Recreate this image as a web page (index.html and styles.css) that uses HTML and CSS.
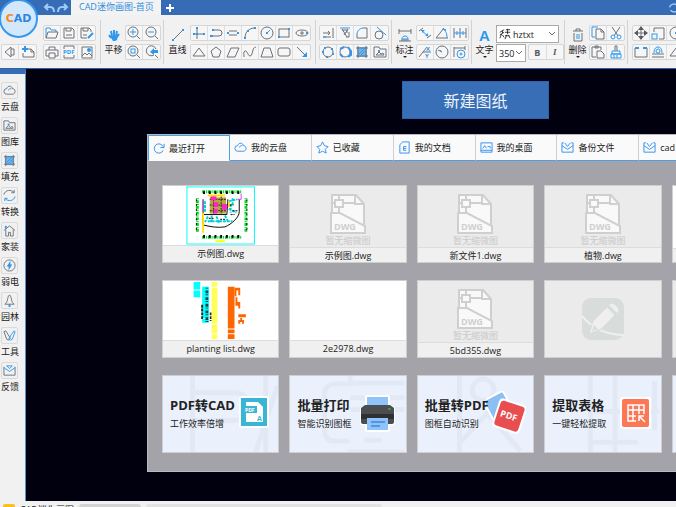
FILE: index.html
```html
<!DOCTYPE html>
<html lang="zh-CN">
<head>
  <meta charset="UTF-8">
  <meta name="viewport" content="width=device-width, initial-scale=1.0">
  <title>CAD迷你画图</title>
  <link rel="stylesheet" href="styles.css">
</head>
<body>
  <!-- icon sprite -->
  <svg class="sprite" aria-hidden="true">
    <symbol id="i-prev" viewBox="0 0 14 14"><path d="M8 2v10L2 7zM8 4h3v6H8"/></symbol>
    <symbol id="i-newfile" viewBox="0 0 14 14"><path d="M6 4h4l3 3v5H2V8M10 4v3h3"/><path class="b thick" d="M4 1v6M1 4h6"/></symbol>
    <symbol id="i-open" viewBox="0 0 14 14"><path class="b" d="M1 12V2h4l1 2h5v2"/><path d="M1 12l2-6h10l-2 6z"/></symbol>
    <symbol id="i-save" viewBox="0 0 14 14"><path d="M2 2h8l2 2v8H2zM4 2v3h5V2"/><path d="M4 9h6"/></symbol>
    <symbol id="i-saveas" viewBox="0 0 14 14"><path d="M7 12H1V2h8l2 2v2M3 2v3h5V2M3 9h4"/><path class="b thick" d="M8 12l5-5"/></symbol>
    <symbol id="i-print" viewBox="0 0 14 14"><path d="M4 5V2h6v3M4 11H1V5h12v6h-3M4 8h6v5H4z"/></symbol>
    <symbol id="i-pdf" viewBox="0 0 14 14"><path d="M2 4V1h10v3M2 10v3h10v-3"/><text class="tiny" x="1" y="9">PDF</text></symbol>
    <symbol id="i-image" viewBox="0 0 14 14"><path d="M2 2h10v11H2zM2 11l3-3 2 2 2-2 3 3"/><circle class="bf" cx="9" cy="5" r="2"/></symbol>
    <symbol id="i-zoomin" viewBox="0 0 14 14"><circle cx="6" cy="6" r="5"/><path d="M10 10l3 3"/><path class="b" d="M3 6h6M6 3v6"/></symbol>
    <symbol id="i-zoomout" viewBox="0 0 14 14"><circle cx="6" cy="6" r="5"/><path d="M10 10l3 3"/><path class="b" d="M3 6h6"/></symbol>
    <symbol id="i-zoomwin" viewBox="0 0 14 14"><circle cx="6" cy="6" r="5"/><path d="M10 10l3 3"/><rect class="b" x="4" y="4" width="4" height="4"/></symbol>
    <symbol id="i-zoomprev" viewBox="0 0 14 14"><path d="M10 10l3 3M11 4a5 5 0 1 0-2 6"/><path class="bf" d="M5 7l4-4v2h4v3H9v2z"/></symbol>
    <symbol id="i-hand" viewBox="0 0 14 14"><path class="b thick" d="M5 8L4 3M7 8V2M9 8l1-5M10 9l2-3M4 10L2 7"/><path class="bf" d="M3 8h8l-1 4-2 1H6z"/></symbol>
    <symbol id="i-line" viewBox="0 0 14 14"><path d="M2 12L12 2"/><path class="bf" d="M1 11h2v2H1zM11 1h2v2h-2z"/></symbol>
    <symbol id="i-xline" viewBox="0 0 14 14"><path d="M5 1v12M1 8h12"/><path class="bf" d="M4 1h2v2H4zM1 7h2v2H1zM11 7h2v2h-2zM4 7h2v2H4z"/></symbol>
    <symbol id="i-pline" viewBox="0 0 14 14"><path d="M4 4h6a3 3 0 0 1 0 6H3"/><path class="bf" d="M1 9h3v2H1zM3 3h2v2H3z"/></symbol>
    <symbol id="i-mline" viewBox="0 0 14 14"><path d="M3 5h8M3 9h8"/><path class="bf" d="M1 6h2v2H1zM11 6h2v2h-2z"/></symbol>
    <symbol id="i-arc" viewBox="0 0 14 14"><path d="M2 12C2 6 6 2 12 2"/><path class="bf" d="M1 11h2v2H1zM11 1h2v2h-2zM4 4h2v2H4z"/></symbol>
    <symbol id="i-circle" viewBox="0 0 14 14"><circle cx="7" cy="7" r="6"/><path class="b" d="M7 7l3-3"/><path class="bf" d="M6 6h2v2H6z"/></symbol>
    <symbol id="i-rect" viewBox="0 0 14 14"><rect x="2" y="3" width="10" height="8"/><path class="bf" d="M11 2h2v2h-2zM1 10h2v2H1z"/></symbol>
    <symbol id="i-ellipse" viewBox="0 0 14 14"><ellipse cx="7" cy="7" rx="6" ry="3"/><path d="M6 6h2v2H6z"/><path class="bf" d="M11 6h2v2h-2z"/></symbol>
    <symbol id="i-tri" viewBox="0 0 14 14"><path d="M7 3l6 8H1z"/></symbol>
    <symbol id="i-penta" viewBox="0 0 14 14"><path d="M7 2l5 4-2 6H4L2 6z"/></symbol>
    <symbol id="i-para" viewBox="0 0 14 14"><path d="M5 3h8l-4 9H1z"/></symbol>
    <symbol id="i-spline" viewBox="0 0 14 14"><path d="M1 12c0-3-1-5 1-6s3 5 5 5 2-3 3-6 1-2 3-3"/></symbol>
    <symbol id="i-trap" viewBox="0 0 14 14"><path d="M4 3h6l3 9H1z"/></symbol>
    <symbol id="i-round" viewBox="0 0 14 14"><rect x="1" y="3" width="12" height="8" rx="2"/></symbol>
    <symbol id="i-arrow" viewBox="0 0 14 14"><path d="M2 2l8 8"/><path class="bf" d="M12 7v5H7z"/></symbol>
    <symbol id="i-extend" viewBox="0 0 14 14"><path d="M2 7h7M7 5l2 2-2 2M2 11h8M12 2v10"/><path class="b" d="M2 11h3"/></symbol>
    <symbol id="i-trim" viewBox="0 0 14 14"><path d="M4 3l5 8M10 3L6 9M9 3v4"/><path class="b" d="M2 2h10"/><path d="M4 4h4M8 11h3M11 6v5"/></symbol>
    <symbol id="i-fillet" viewBox="0 0 14 14"><path d="M8 2h4v10H2V8"/><path class="b" d="M2 8c0-3 3-6 6-6"/></symbol>
    <symbol id="i-tangent" viewBox="0 0 14 14"><circle cx="6" cy="9" r="4"/><path class="b" d="M4 1l9 8"/></symbol>
    <symbol id="i-poly1" viewBox="0 0 14 14"><circle cx="7" cy="7" r="5"/><path class="bf" d="M3 2h2v2H3zM10 3h2v2h-2zM11 8h2v2h-2zM1 6h2v2H1zM5 11h2v2H5z"/></symbol>
    <symbol id="i-poly2" viewBox="0 0 14 14"><circle cx="7" cy="7" r="5"/><path class="b thick" d="M2 4l4-2M10 2l3 4v4l-3 2M2 9l3 3"/></symbol>
    <symbol id="i-hatch" viewBox="0 0 14 14"><rect class="fillb" x="2" y="2" width="10" height="10"/><path d="M3 1v12M11 1v12M1 3h12M1 11h12"/><path class="b" d="M4 9l5-5M6 10l4-4"/></symbol>
    <symbol id="i-gallery" viewBox="0 0 14 14"><path d="M1 12V2h5l1 2h6v8z"/><path d="M3 10l3-3 2 2 2-1 1 2z"/><path class="bf" d="M5 5h2v2H5z"/></symbol>
    <symbol id="i-dim" viewBox="0 0 14 14"><path d="M1 1v5M13 1v5M1 3h12M3 12h8M1 13h12"/><path class="b" d="M4 11c0-4 6-4 6 0z"/></symbol>
    <symbol id="i-aligned" viewBox="0 0 14 14"><path d="M1 5l4-3M9 12l4-3"/><path class="b" d="M3 4l8 7"/><path class="bf" d="M4 4h3L4 7zM10 7v3H7z"/></symbol>
    <symbol id="i-angle" viewBox="0 0 14 14"><path d="M13 12H1L9 2"/><path class="b" d="M7 3c4 1 5 5 5 9"/><path class="bf" d="M8 3h3v2z"/></symbol>
    <symbol id="i-cont" viewBox="0 0 14 14"><path d="M1 2v10M7 2v10M13 2v10"/><path class="b" d="M1 7h12M4 5v4M10 5v4"/></symbol>
    <symbol id="i-coord" viewBox="0 0 14 14"><path d="M1 12l4-5h8M5 7l4-5"/><text class="tiny" x="8" y="6">X</text><text class="tiny" x="7" y="13">Y</text></symbol>
    <symbol id="i-radius" viewBox="0 0 14 14"><circle cx="7" cy="7" r="6"/><path d="M7 7L3 5"/><path class="b" d="M7 7l-2-2"/></symbol>
    <symbol id="i-dimset" viewBox="0 0 14 14"><path d="M1 2v10M12 1v4M1 3h11"/><circle class="b" cx="8" cy="9" r="4"/><circle class="b" cx="8" cy="9" r="1"/></symbol>
    <symbol id="i-fontmark" viewBox="0 0 14 14"><path d="M1 5l5-3M4 3v3M1 8l5-3M3 7l-2 5M4 8l2 3M8 2h5M10 1v6M7 5h6M9 8l-2 5M11 8l2 4M7 9h5"/></symbol>
    <symbol id="i-trash" viewBox="0 0 14 14"><path d="M2 3h10M5 3V1h4v2M3 5v8h8V5"/><path class="b" d="M6 6v5M8 6v5"/></symbol>
    <symbol id="i-copy" viewBox="0 0 14 14"><path class="b" d="M4 11H1V1h6"/><path d="M5 3h5l3 3v7H5zM10 3v3h3"/></symbol>
    <symbol id="i-cut" viewBox="0 0 14 14"><path d="M3 1l6 9M11 1L5 10"/><circle class="b" cx="4" cy="11" r="2"/><circle class="b" cx="10" cy="11" r="2"/></symbol>
    <symbol id="i-paste" viewBox="0 0 14 14"><path d="M5 12H1V2h9v3M4 1h3v2H4zM6 6h4l3 3v4H6z"/></symbol>
    <symbol id="i-brush" viewBox="0 0 14 14"><path d="M6 6V1h2v5"/><path class="b" d="M3 6h8v3H3z"/><path class="b" d="M2 9h10v4H2zM5 10v3M8 10v3"/></symbol>
    <symbol id="i-move" viewBox="0 0 14 14"><path d="M7 3v8M3 7h8"/><path class="gf" d="M7 0l3 4H4zM7 14l3-4H4zM0 7l4-3v6zM14 7l-4-3v6z"/></symbol>
    <symbol id="i-scale" viewBox="0 0 14 14"><path d="M3 6V2h10v11H8"/><rect class="b" x="1" y="8" width="5" height="5"/></symbol>
    <symbol id="i-break" viewBox="0 0 14 14"><path d="M1 3v9h12V3"/><path class="b thick" d="M1 3h4M9 3h4"/></symbol>
    <symbol id="i-stamp" viewBox="0 0 14 14"><path class="b" d="M3 8c0-3 1-6 4-6s4 3 4 6"/><path d="M1 9h12M1 12h12"/><circle class="b" cx="7" cy="6" r="2"/></symbol>
    <symbol id="i-cloud" viewBox="0 0 14 14"><path d="M4 11a3 3 0 0 1 0-6c1-4 6-3 6 0 4 0 4 6 0 6z"/><path class="b" d="M6 7c0-2 2-2 3-2"/></symbol>
    <symbol id="i-sync" viewBox="0 0 14 14"><path d="M1 6c1-5 8-6 11-2V1M12 4H9"/><path class="b" d="M13 8c-1 5-8 6-11 2v3M2 10h3"/></symbol>
    <symbol id="i-home" viewBox="0 0 14 14"><path d="M1 7l6-5 6 5M3 6v7h3V9h2v4h3V6"/><path class="b thick" d="M3 2v3"/></symbol>
    <symbol id="i-power" viewBox="0 0 14 14"><circle cx="7" cy="7" r="6"/><path class="bf" d="M8 2L4 8h2v4l4-6H8z"/></symbol>
    <symbol id="i-tree" viewBox="0 0 14 14"><path d="M7 1C5 2 5 7 4 9l-2 2h10l-2-2C9 7 9 2 7 1z"/><path class="bf" d="M6 11h2v3H6z"/></symbol>
    <symbol id="i-tools" viewBox="0 0 14 14"><path d="M1 3l2-1 5 8-2 2-2-1z"/><path class="b" d="M12 2l1 1-3 8-2 1-2-1 3-5z"/></symbol>
    <symbol id="i-mail" viewBox="0 0 14 14"><path d="M1 3v9h12V3"/><path class="b" d="M1 4l6 4 6-4M4 2l3 3 3-3z"/></symbol>
    <symbol id="i-recent" viewBox="0 0 14 14"><path d="M12 9a5 5 0 1 1 0-4M13 2v4H9"/></symbol>
    <symbol id="i-star" viewBox="0 0 14 14"><path d="M7 1l2 4 4 1-3 3 1 4-4-2-4 2 1-4-3-3 4-1z"/></symbol>
    <symbol id="i-doc" viewBox="0 0 14 14"><path d="M5 1h7v12H2V4zM9 6H6v4h3M6 8h3"/></symbol>
    <symbol id="i-desktop" viewBox="0 0 14 14"><path d="M1 2h12v10H1zM1 10h12M3 8l2-3 2 3M8 6h3v2"/></symbol>
    <symbol id="i-mailtab" viewBox="0 0 14 14"><path d="M3 2H1v10h12V2h-2M1 5l6 4 6-4M4 2l3 4 3-4"/></symbol>
    <symbol id="i-chev" viewBox="0 0 8 8"><path d="M1 2l3 3 3-3"/></symbol>

    <symbol id="dwg-file" viewBox="0 0 36 40">
      <path class="paper" d="M2 1h24l8 9v29H2z"/>
      <path class="outline" d="M2 19V1h24l8 9v22M2 9h22M9 1v18M25 1v9h9M1 19h9l25 13v7H1z"/>
      <rect class="outline paper" x="5" y="6" width="8" height="7"/>
      <text class="dwg-text" x="4" y="36">DWG</text>
    </symbol>
  </svg>

  <div class="app">
    <header class="titlebar">
      <div class="history">
        <button class="plain" aria-label="撤销"><svg class="icon history-icon" viewBox="0 0 12 10"><path d="M5 1L2 4l3 3M2 4h5c3 0 4 2 4 5"/></svg></button>
        <button class="plain" aria-label="重做"><svg class="icon history-icon" viewBox="0 0 12 10"><path d="M7 1l3 3-3 3M10 4H5C2 4 1 6 1 9"/></svg></button>
      </div>
      <a class="page-tab" href="#">CAD迷你画图-首页</a>
      <button class="plain add-tab" aria-label="新标签">
        <svg class="icon" viewBox="0 0 10 10"><path d="M5 1v8M1 5h8"/></svg>
      </button>
      <div class="window-actions">
        <button class="plain" aria-label="刷新"><svg class="icon history-icon" viewBox="0 0 14 14"><path d="M1 6c1-5 8-6 11-2M13 8c-1 5-8 6-11 2"/></svg></button>
      </div>
    </header>
    <a class="logo" href="#" aria-label="CAD"><span>C</span>AD</a>

    <nav class="toolbar">
      <div class="section file-section">
        <div class="rows">
          <div class="group nav-group"><button aria-label="后退"><svg class="icon"><use href="#i-prev"/></svg></button><button aria-label="新建"><svg class="icon"><use href="#i-newfile"/></svg></button></div>
        </div>
        <div class="rows">
          <div class="group"><button aria-label="打开"><svg class="icon"><use href="#i-open"/></svg></button><button aria-label="保存"><svg class="icon"><use href="#i-save"/></svg></button><button aria-label="另存为"><svg class="icon"><use href="#i-saveas"/></svg></button></div>
          <div class="group"><button aria-label="打印"><svg class="icon"><use href="#i-print"/></svg></button><button aria-label="PDF"><svg class="icon"><use href="#i-pdf"/></svg></button><button aria-label="图片"><svg class="icon"><use href="#i-image"/></svg></button></div>
        </div>
      </div>

      <div class="section">
        <button class="big"><svg class="icon"><use href="#i-hand"/></svg>平移</button>
        <div class="rows">
          <div class="group"><button aria-label="放大"><svg class="icon"><use href="#i-zoomin"/></svg></button><button aria-label="缩小"><svg class="icon"><use href="#i-zoomout"/></svg></button></div>
          <div class="group"><button aria-label="窗口缩放"><svg class="icon"><use href="#i-zoomwin"/></svg></button><button aria-label="上一视图"><svg class="icon"><use href="#i-zoomprev"/></svg></button></div>
        </div>
      </div>

      <div class="section roomy">
        <button class="big"><svg class="icon"><use href="#i-line"/></svg>直线</button>
        <div class="rows">
          <div class="group">
            <button aria-label="构造线"><svg class="icon"><use href="#i-xline"/></svg></button>
            <button aria-label="多段线"><svg class="icon"><use href="#i-pline"/></svg></button>
            <button aria-label="双线"><svg class="icon"><use href="#i-mline"/></svg></button>
            <button aria-label="圆弧"><svg class="icon"><use href="#i-arc"/></svg></button>
            <button aria-label="圆"><svg class="icon"><use href="#i-circle"/></svg></button>
            <button aria-label="矩形"><svg class="icon"><use href="#i-rect"/></svg></button>
            <button aria-label="椭圆"><svg class="icon"><use href="#i-ellipse"/></svg></button>
          </div>
          <div class="group">
            <button aria-label="三角形"><svg class="icon"><use href="#i-tri"/></svg></button>
            <button aria-label="多边形"><svg class="icon"><use href="#i-penta"/></svg></button>
            <button aria-label="平行四边形"><svg class="icon"><use href="#i-para"/></svg></button>
            <button aria-label="样条曲线"><svg class="icon"><use href="#i-spline"/></svg></button>
            <button aria-label="梯形"><svg class="icon"><use href="#i-trap"/></svg></button>
            <button aria-label="圆角矩形"><svg class="icon"><use href="#i-round"/></svg></button>
            <button aria-label="箭头"><svg class="icon"><use href="#i-arrow"/></svg></button>
          </div>
        </div>
      </div>

      <div class="section">
        <div class="rows">
          <div class="group">
            <button aria-label="延伸"><svg class="icon"><use href="#i-extend"/></svg></button>
            <button aria-label="修剪"><svg class="icon"><use href="#i-trim"/></svg></button>
            <button aria-label="圆角"><svg class="icon"><use href="#i-fillet"/></svg></button>
            <button aria-label="相切"><svg class="icon"><use href="#i-tangent"/></svg></button>
          </div>
          <div class="group">
            <button aria-label="内接"><svg class="icon"><use href="#i-poly1"/></svg></button>
            <button aria-label="外切"><svg class="icon"><use href="#i-poly2"/></svg></button>
            <button aria-label="填充"><svg class="icon"><use href="#i-hatch"/></svg></button>
            <button aria-label="图库"><svg class="icon"><use href="#i-gallery"/></svg></button>
          </div>
        </div>
      </div>

      <div class="section">
        <button class="big has-menu"><svg class="icon"><use href="#i-dim"/></svg>标注</button>
        <div class="rows">
          <div class="group"><button aria-label="对齐标注"><svg class="icon"><use href="#i-aligned"/></svg></button><button aria-label="角度标注"><svg class="icon"><use href="#i-angle"/></svg></button><button aria-label="连续标注"><svg class="icon"><use href="#i-cont"/></svg></button></div>
          <div class="group"><button aria-label="坐标标注"><svg class="icon"><use href="#i-coord"/></svg></button><button aria-label="半径标注"><svg class="icon"><use href="#i-radius"/></svg></button><button aria-label="标注设置"><svg class="icon"><use href="#i-dimset"/></svg></button></div>
        </div>
      </div>

      <div class="section">
        <button class="big has-menu"><span class="letter">A</span>文字</button>
        <div class="font-rows">
          <div class="select-box">
            <svg class="icon dark"><use href="#i-fontmark"/></svg>
            <select aria-label="字体"><option>hztxt</option></select>
            <svg class="icon chev"><use href="#i-chev"/></svg>
          </div>
          <div class="font-size-row">
            <div class="select-box small">
              <select aria-label="字高"><option>350</option></select>
              <svg class="icon chev"><use href="#i-chev"/></svg>
            </div>
            <div class="group letters"><button aria-label="粗体">B</button><button class="italic" aria-label="斜体">I</button></div>
          </div>
        </div>
      </div>

      <div class="section">
        <button class="big has-menu"><svg class="icon"><use href="#i-trash"/></svg>删除</button>
        <div class="rows">
          <div class="group"><button aria-label="复制"><svg class="icon"><use href="#i-copy"/></svg></button><button aria-label="剪切"><svg class="icon"><use href="#i-cut"/></svg></button></div>
          <div class="group"><button aria-label="粘贴"><svg class="icon"><use href="#i-paste"/></svg></button><button aria-label="格式刷"><svg class="icon"><use href="#i-brush"/></svg></button></div>
        </div>
      </div>

      <div class="section roomy">
        <div class="rows">
          <div class="group"><button aria-label="移动"><svg class="icon"><use href="#i-move"/></svg></button><button aria-label="缩放"><svg class="icon"><use href="#i-scale"/></svg></button><button aria-label="旋转"><svg class="icon"><use href="#i-circle"/></svg></button></div>
          <div class="group"><button aria-label="打断"><svg class="icon"><use href="#i-break"/></svg></button><button aria-label="图章"><svg class="icon"><use href="#i-stamp"/></svg></button><button aria-label="镜像"><svg class="icon"><use href="#i-tri"/></svg></button></div>
        </div>
      </div>
    </nav>

    <div class="main">
      <aside class="sidebar">
        <button><svg class="icon"><use href="#i-cloud"/></svg>云盘</button>
        <button><svg class="icon"><use href="#i-gallery"/></svg>图库</button>
        <button><svg class="icon"><use href="#i-hatch"/></svg>填充</button>
        <button><svg class="icon"><use href="#i-sync"/></svg>转换</button>
        <button><svg class="icon"><use href="#i-home"/></svg>家装</button>
        <button><svg class="icon"><use href="#i-power"/></svg>弱电</button>
        <button><svg class="icon"><use href="#i-tree"/></svg>园林</button>
        <button><svg class="icon"><use href="#i-tools"/></svg>工具</button>
        <button><svg class="icon"><use href="#i-mail"/></svg>反馈</button>
      </aside>

      <main class="canvas">
        <button class="new-drawing">新建图纸</button>

        <section class="panel">
          <div class="tabs">
            <a class="tab active" href="#"><svg class="icon"><use href="#i-recent"/></svg>最近打开</a>
            <a class="tab" href="#"><svg class="icon"><use href="#i-cloud"/></svg>我的云盘</a>
            <a class="tab" href="#"><svg class="icon"><use href="#i-star"/></svg>已收藏</a>
            <a class="tab" href="#"><svg class="icon"><use href="#i-doc"/></svg>我的文档</a>
            <a class="tab" href="#"><svg class="icon"><use href="#i-desktop"/></svg>我的桌面</a>
            <a class="tab" href="#"><svg class="icon"><use href="#i-mailtab"/></svg>备份文件</a>
            <a class="tab" href="#"><svg class="icon"><use href="#i-mailtab"/></svg>cad</a>
            <a class="tab" href="#"></a>
          </div>

          <div class="cards">
            <a class="card" href="#">
              <svg class="thumb" viewBox="0 0 115 62">
                <rect x="22" y="1" width="71" height="60" fill="#fff" stroke="#00ffff" stroke-width="1"/>
                <g fill="none" stroke="#00d820" stroke-width="3">
                  <path d="M38 6h41M38 54h41" stroke-dasharray="3 1 1 1"/>
                  <path d="M33 13v36M84 13v36" stroke-dasharray="1 1 3 1"/>
                </g>
                <g fill="none" stroke="#000" stroke-width="1">
                  <path d="M39 7h39M39 53h39" stroke-width="3" stroke-dasharray="2 4"/>
                  <path d="M32 14v34M85 14v34" stroke-dasharray="2 3"/>
                  <path d="M39 14v27c9 2 15 3 23 2 7-3 15-10 15-16V14M39 30h25l1-16"/>
                </g>
                <path d="M44 32l-3 6M48 31v8M53 32l3 7M62 31l3 6M66 16l9-2M66 24l8 4M68 19v9M41 16v12M44 37h26M70 13v7" fill="none" stroke="#00cfd8" stroke-width="2" stroke-dasharray="3 1"/>
                <rect x="46" y="12" width="17" height="17" fill="#b5a83c"/>
                <path d="M46 14h17M46 20h17M46 26h17M50 11v19M58 11v19" stroke="#222" stroke-dasharray="2 1"/>
                <path d="M47 10h6v5h-6zM50 17h5v5h-5zM59 19h5v6h-5zM50 24h4v5h-4z" fill="#ff20d0"/>
                <path d="M79 8v6M75 14h4M39 14v13" stroke="#d040ff" stroke-width="1"/>
                <path d="M39 28v21M44 10h18M66 16v6" stroke="#ffe000" stroke-width="2"/>
                <path d="M52 58h10" stroke="#ffff00" stroke-width="2"/>
                <path d="M67 20h4M70 26h5M57 35h5M45 34h5M68 30h4" stroke="#000" stroke-dasharray="2 1"/>
              </svg>
              <span class="name">示例图.dwg</span>
            </a>
            <a class="card" href="#"><span class="thumb empty"><svg class="dwg"><use href="#dwg-file"/></svg>暂无缩微图</span><span class="name">示例图.dwg</span></a>
            <a class="card" href="#"><span class="thumb empty"><svg class="dwg"><use href="#dwg-file"/></svg>暂无缩微图</span><span class="name">新文件1.dwg</span></a>
            <a class="card" href="#"><span class="thumb empty"><svg class="dwg"><use href="#dwg-file"/></svg>暂无缩微图</span><span class="name">植物.dwg</span></a>
            <a class="card" href="#"><span class="thumb"></span><span class="name"></span></a>

            <a class="card" href="#">
              <svg class="thumb" viewBox="0 0 115 62">
                <path d="M29 1h7v8h-7zM29 10h7v7h-7zM38 6h7v33h-7zM38 40h7v4h-7z" fill="#00ffff"/>
                <path d="M43 7v36" stroke="#004850" stroke-width="3" stroke-dasharray="1 2 3 1"/>
                <path d="M38 25v16M47 33v9" stroke="#222" stroke-width="2" stroke-dasharray="3 1"/>
                <path d="M48 1h6v5h-6zM48 7h6v38h-6zM48 46h6v9h-6zM48 56h6v5h-6z" fill="#ffff58"/>
                <path d="M65 6h7v44h-7zM65 51h7v4h-7zM65 56h7v5h-7z" fill="#ff6600"/>
                <path d="M72 7h6v8h-2v-5h-2v6h-2zM73 17h2v6h-2zM73 22h5v7h-2v-3h-3zM76 35h8v3h-8zM76 41h2v-2h2v2h2v4h-2v-2h-2v2h-2z" fill="#ff6600"/>
              </svg>
              <span class="name">planting list.dwg</span>
            </a>
            <a class="card" href="#"><span class="thumb"></span><span class="name">2e2978.dwg</span></a>
            <a class="card" href="#"><span class="thumb empty"><svg class="dwg"><use href="#dwg-file"/></svg>暂无缩微图</span><span class="name">5bd355.dwg</span></a>
            <a class="card blank" href="#" aria-label="空">
              <svg viewBox="0 0 42 42">
                <rect x="0" y="0" width="42" height="42" rx="9" fill="#d8dcdb"/>
                <path d="M0 18c9 11 22 19 42 19" fill="none" stroke="#efefef" stroke-width="2"/>
                <path d="M7 36l4-13L25 9l8 8-14 14z" fill="#efefef" stroke="#d8dcdb"/>
                <path d="M27 7c2-2 4-2 6 0l2 2c2 2 2 4 0 6z" fill="#efefef"/>
                <path d="M12 27l4 4-6 2z" fill="#d8dcdb"/>
              </svg>
            </a>
            <a class="card blank" href="#" aria-label="空"></a>

            <a class="card promo" href="#">
              <svg class="backdrop" viewBox="0 0 115 77"><path d="M29 0v77M29 17h42q14 0 14 14t-14 14H29M103 0v77M115 10l-22 67"/></svg>
              <svg class="promo-icon" viewBox="0 0 40 44">
                <rect x="8" y="5" width="30" height="32" rx="3" fill="#fff"/>
                <rect x="10" y="7" width="26" height="28" fill="#3bb5d4"/>
                <path d="M15 11h12l5 5v15H15z" fill="#fff"/>
                <rect x="13" y="15" width="13" height="7" fill="#3bb5d4"/>
                <text x="14" y="21" class="mini-label">PDF</text>
                <text x="26" y="30" class="mini-a">A</text>
              </svg>
              <strong>PDF转CAD</strong><span>工作效率倍增</span>
            </a>
            <a class="card promo" href="#">
              <svg class="backdrop" viewBox="0 0 115 77"><path d="M60 0v8H45q-11 0-11 11v36q0 11 11 11h14M60 7h55M60 22h55M60 34h55M74 65h18M58 77h57"/></svg>
              <svg class="promo-icon" viewBox="0 0 40 44">
                <path d="M8 6h21v9l5 3v14l-5 1v6H8v-6l-5-1V18l5-3z" fill="#fff" stroke="#fff" stroke-width="4" stroke-linejoin="round"/>
                <path d="M8 6h21v11H8z" fill="#8fc3fa"/>
                <path d="M6 14h25l4 3v14q0 2-2 2H4q-2 0-2-2V17z" fill="#4c4d50"/>
                <path d="M2 23h33v5H2z" fill="#2e3033"/>
                <path d="M29 18h3" stroke="#24d66c" stroke-width="1"/>
                <path d="M8 27h21v12H8z" fill="#8fc3fa"/>
                <path d="M12 31h14M12 35h9" stroke="#1a69cf" stroke-width="1"/>
              </svg>
              <strong>批量打印</strong><span>智能识别图框</span>
            </a>
            <a class="card promo" href="#">
              <svg class="backdrop" viewBox="0 0 115 77"><path d="M41 0v77M41 68l28-30 34 38"/><circle cx="65" cy="14" r="11"/></svg>
              <svg class="promo-icon" viewBox="0 0 40 44">
                <g transform="rotate(-28 14 18)"><rect x="2" y="2" width="24" height="32" rx="3" fill="#fff"/><rect x="4" y="4" width="20" height="28" rx="2" fill="#8cc0f3"/><path d="M4 25l8-7 8 9v5H4z" fill="#315985"/></g>
                <g transform="rotate(18 23 25)"><rect x="9" y="10" width="29" height="30" rx="4" fill="#fff"/><rect x="11" y="12" width="25" height="26" rx="3" fill="#e84e50"/><text x="14" y="28" class="pdf-label">PDF</text></g>
              </svg>
              <strong>批量转PDF</strong><span>图框自动识别</span>
            </a>
            <a class="card promo" href="#">
              <svg class="backdrop" viewBox="0 0 115 77"><path d="M45 0v77M70 0v77M45 36h70M45 67h48M110 5v50"/></svg>
              <svg class="promo-icon" viewBox="0 0 40 44">
                <rect x="6" y="6" width="31" height="32" rx="3" fill="#fff"/>
                <rect x="8" y="8" width="27" height="28" rx="2" fill="#fd7754"/>
                <path d="M22 30h-8V14h16v9M14 19h16M14 25h8M19 14v16M25 14v9M31 31l-6-6M25 30v-5h5" fill="none" stroke="#fff" stroke-width="1.500"/>
              </svg>
              <strong>提取表格</strong><span>一键轻松提取</span>
            </a>
            <a class="card promo" href="#" aria-label="更多"></a>
          </div>
        </section>
      </main>
    </div>

    <footer class="statusbar">
      <span class="status-icon"></span>
      <span class="status-title">CAD迷你画图</span>
      <span class="pill"></span>
      <span class="pill hint"></span>
    </footer>
  </div>
</body>
</html>
```
FILE: styles.css
```css
* {
  box-sizing: border-box;
}
body {
  margin: 0;
  height: 100vh;
  overflow: hidden;
  font-family: "Open Sans", "Noto Sans CJK SC", sans-serif;
  font-size: 9px;
  color: #222;
  background-color: #f1f1f1;
}
a {
  color: inherit;
  text-decoration: none;
}
button {
  font: inherit;
  color: inherit;
  padding: 0;
  border: none;
  background: none;
  cursor: pointer;
}
.sprite {
  display: none;
}
.app {
  position: relative;
  display: flex;
  flex-direction: column;
  min-width: 925px;
  height: 100vh;
}

/* icons */
.icon {
  display: block;
  flex: none;
  width: 14px;
  height: 14px;
  fill: none;
  stroke: #6c7178;
  stroke-width: 1;
}
.b {
  stroke: #2f97ee;
}
.bf {
  fill: #2f97ee;
  stroke: none;
}
.gf {
  fill: #555b63;
  stroke: none;
}
.fillb {
  fill: #6fb5f2;
  stroke: none;
}
.thick {
  stroke-width: 2;
}
.dark {
  stroke: #222;
}
.tiny {
  font-size: 6px;
  font-weight: bold;
  fill: #2f97ee;
  stroke: none;
}

/* title bar */
.titlebar {
  display: flex;
  flex: none;
  height: 15px;
  background-color: #356cb5;
}
.history {
  display: flex;
  align-items: center;
  gap: 2px;
  width: 71px;
  padding-left: 43px;
}
.history-icon {
  width: 12px;
  height: 10px;
  stroke: #9ccbf7;
  stroke-width: 2;
}
.page-tab {
  padding: 0 7px 0 8px;
  line-height: 13px;
  color: #2d8ce0;
  background-color: #f3f3f3;
}
.add-tab {
  padding: 0 4px;
}
.add-tab .icon {
  width: 10px;
  height: 10px;
  stroke: #fff;
  stroke-width: 2;
}
.window-actions {
  display: flex;
  width: 257px;
  margin-left: auto;
}
.logo {
  position: absolute;
  top: -1px;
  left: -1px;
  display: flex;
  align-items: center;
  justify-content: center;
  width: 39px;
  height: 39px;
  border: 2px solid #3796ef;
  border-radius: 50%;
  background-color: #d3e8fb;
  font-family: "DejaVu Sans", sans-serif;
  font-size: 11px;
  font-weight: bold;
  color: #2f86e0;
}
.logo span {
  color: #f58a1f;
}

/* toolbar */
.toolbar {
  display: flex;
  flex: none;
  height: 54px;
  padding-top: 5px;
  border-bottom: 1px solid #2a62a8;
  background-color: #f1f1f1;
}
.section {
  display: flex;
  gap: 2px;
  height: 44px;
  padding: 5px 2px 0 3px;
  border-right: 1px solid #d2d2d2;
}
.section.roomy {
  gap: 3px;
  padding: 5px 4px 0 4px;
}
.section.file-section {
  gap: 6px;
  padding: 5px 4px 0 1px;
}
.rows {
  display: flex;
  flex-direction: column;
  gap: 3px;
}
.group {
  display: flex;
  height: 16px;
  border: 1px solid #d6d6d6;
  border-radius: 2px;
  background-color: #f6f6f6;
}
.group button {
  display: flex;
  align-items: center;
  justify-content: center;
  width: 17px;
  border-right: 1px solid #dedede;
}
.group button:last-child {
  border-right: none;
}
.nav-group {
  margin-top: 19px;
}
.big {
  display: flex;
  flex-direction: column;
  align-items: center;
  width: 19px;
  height: 36px;
  padding-top: 3px;
  line-height: 12px;
  white-space: nowrap;
}
.big .icon {
  margin-bottom: 2px;
}
.has-menu::after {
  content: "";
  border: 2px solid transparent;
  border-top-color: #222;
}
.letter {
  height: 16px;
  font-family: "Liberation Sans", sans-serif;
  font-size: 15px;
  line-height: 16px;
  font-weight: bold;
  color: #2f97ee;
}
.font-rows {
  display: flex;
  flex-direction: column;
  gap: 1px;
  width: 63px;
  margin-right: 3px;
}
.select-box {
  display: flex;
  align-items: center;
  gap: 2px;
  height: 18px;
  padding: 0 2px;
  border: 1px solid #aaa;
  background-color: #fff;
}
.select-box .dark {
  width: 12px;
  height: 12px;
}
.select-box select {
  flex: 1;
  min-width: 0;
  padding: 0;
  border: none;
  appearance: none;
  background: none;
  font: inherit;
  color: #222;
}
.select-box.small {
  gap: 0;
  width: 33px;
}
.select-box .chev {
  width: 8px;
  height: 8px;
}
.font-size-row {
  display: flex;
  gap: 2px;
}
.letters {
  flex: 1;
  font-weight: bold;
  color: #555b63;
}
.letters button {
  flex: 1;
}
.letters .italic {
  font-family: "Liberation Serif", serif;
  font-style: italic;
}

/* sidebar */
.main {
  display: flex;
  flex: 1;
  min-height: 0;
}
.sidebar {
  display: flex;
  flex: none;
  flex-direction: column;
  align-items: flex-start;
  gap: 4px;
  width: 26px;
  padding: 8px 0 0 1px;
  border-top: 5px solid #356cb5;
  border-right: 1px solid #5f8fc9;
  background-color: #f1f1f1;
}
.sidebar button {
  line-height: 12px;
  white-space: nowrap;
}
.sidebar .icon {
  width: 17px;
  height: 17px;
  margin-bottom: 2px;
  padding: 1px;
  border: 1px solid #dadada;
  border-radius: 2px;
}

/* home screen */
.canvas {
  display: flex;
  flex: 1;
  flex-direction: column;
  align-items: center;
  gap: 15px;
  padding: 12px 121px 0;
  background-color: #00000f;
}
.new-drawing {
  width: 147px;
  height: 38px;
  flex: none;
  border: 1px solid #2f64aa;
  background-color: #376eb6;
  color: #eef4fb;
  font-size: 16px;
}
.panel {
  width: 100%;
  border: 1px solid #b9b9bd;
  background-color: #a4a3a9;
}
.tabs {
  display: grid;
  grid-template-columns: repeat(8, 1fr);
  height: 26px;
  background-color: #fafafa;
}
.tab {
  display: flex;
  align-items: center;
  gap: 4px;
  padding-left: 4px;
  border-right: 1px solid #cfcfcf;
  border-bottom: 1px solid #4ba0ea;
}
.tab.active {
  padding-left: 3px;
  border: 1px solid #4ba0ea;
  border-bottom-color: #fafafa;
}
.tab .icon {
  width: 13px;
  height: 13px;
}
.tab .icon {
  stroke: #2f8ff0;
}
.cards {
  display: grid;
  grid-template-columns: repeat(5, 1fr);
  gap: 17px 10px;
  padding: 24px 14px 18px;
}
.card {
  display: flex;
  flex-direction: column;
  height: 78px;
  border: 1px solid #cfcfcf;
  background-color: #f0f0f0;
}
.thumb {
  display: block;
  width: 100%;
  height: 62px;
  background-color: #fff;
}
.thumb.empty {
  display: flex;
  flex-direction: column;
  align-items: center;
  padding-top: 8px;
  background-color: #ebebeb;
  color: #c9c9c9;
  line-height: 13px;
}
.dwg {
  width: 36px;
  height: 40px;
  flex: none;
}
.paper {
  fill: #f9f9f9;
}
.outline {
  stroke: #cfcfcf;
  stroke-width: 2;
}
path.outline {
  fill: none;
}
.dwg-text {
  font-size: 9px;
  font-weight: bold;
  fill: #cfcfcf;
}
.name {
  flex: 1;
  border-top: 1px solid #dcdcdc;
  text-align: center;
  line-height: 16px;
}
.card.blank {
  align-items: center;
  justify-content: center;
  background-color: #ebebeb;
}
.blank svg {
  width: 42px;
  height: 42px;
}
.card.promo {
  position: relative;
  justify-content: center;
  padding-left: 7px;
  background-color: #eaf1fd;
}
.promo strong {
  position: relative;
  font-size: 13px;
  line-height: 19px;
}
.promo span {
  position: relative;
  line-height: 18px;
}
.backdrop {
  position: absolute;
  inset: 0;
  width: 100%;
  height: 100%;
  fill: none;
  stroke: #e2e9f5;
  stroke-width: 5;
}
.promo-icon {
  position: absolute;
  top: 15px;
  right: 7px;
  width: 40px;
  height: 44px;
}
.mini-label {
  font-size: 5px;
  font-weight: bold;
  fill: #fff;
}
.mini-a {
  font-size: 7px;
  font-weight: bold;
  fill: #3bb5d4;
}
.pdf-label {
  font-size: 9px;
  font-weight: bold;
  fill: #fff;
}

/* status bar */
.statusbar {
  display: flex;
  flex: none;
  gap: 5px;
  height: 6px;
  padding: 3px 0 0 3px;
  overflow: hidden;
  background-color: #f1f1f1;
}
.status-icon {
  width: 12px;
  height: 12px;
  border-radius: 2px;
  background-color: #f7c11e;
}
.status-title {
  line-height: 12px;
}
.pill {
  width: 62px;
  height: 12px;
  border-radius: 3px;
  background-color: #d3d3d3;
}
.pill.hint {
  width: 236px;
  background-color: #e2e2e2;
}
```
